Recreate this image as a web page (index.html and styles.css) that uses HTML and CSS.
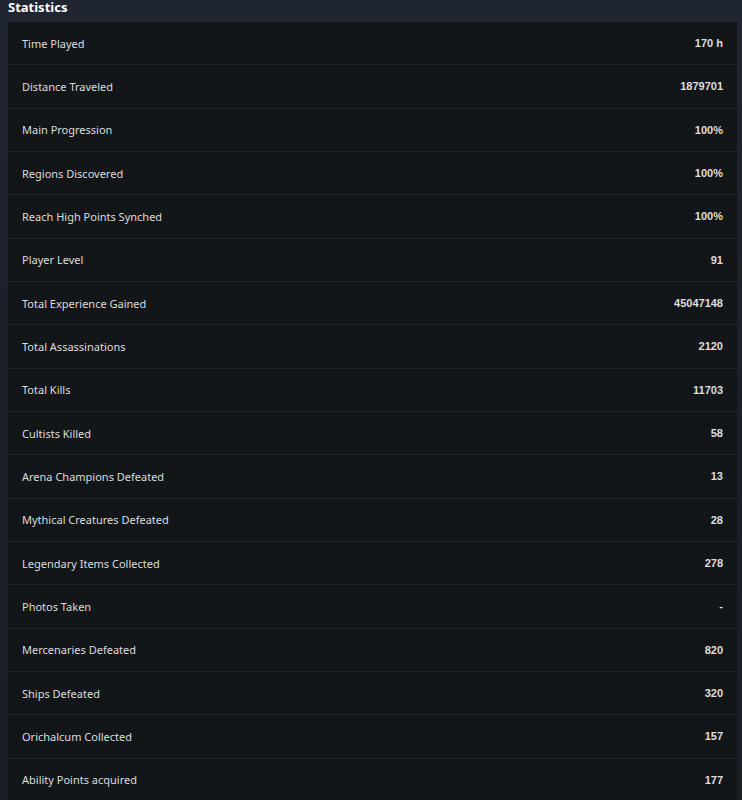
FILE: index.html
```html
<!DOCTYPE html>
<html>
<head>
<meta charset="utf-8">
<link rel="stylesheet" href="styles.css">
</head>
<body>
<h2 class="title">Statistics</h2>
<div class="panel">
  <div class="row"><span class="label">Time Played</span><span class="value">170 h</span></div>
  <div class="row"><span class="label">Distance Traveled</span><span class="value">1879701</span></div>
  <div class="row"><span class="label">Main Progression</span><span class="value">100%</span></div>
  <div class="row"><span class="label">Regions Discovered</span><span class="value">100%</span></div>
  <div class="row"><span class="label">Reach High Points Synched</span><span class="value">100%</span></div>
  <div class="row"><span class="label">Player Level</span><span class="value">91</span></div>
  <div class="row"><span class="label">Total Experience Gained</span><span class="value">45047148</span></div>
  <div class="row"><span class="label">Total Assassinations</span><span class="value">2120</span></div>
  <div class="row"><span class="label">Total Kills</span><span class="value">11703</span></div>
  <div class="row"><span class="label">Cultists Killed</span><span class="value">58</span></div>
  <div class="row"><span class="label">Arena Champions Defeated</span><span class="value">13</span></div>
  <div class="row"><span class="label">Mythical Creatures Defeated</span><span class="value">28</span></div>
  <div class="row"><span class="label">Legendary Items Collected</span><span class="value">278</span></div>
  <div class="row"><span class="label">Photos Taken</span><span class="value">-</span></div>
  <div class="row"><span class="label">Mercenaries Defeated</span><span class="value">820</span></div>
  <div class="row"><span class="label">Ships Defeated</span><span class="value">320</span></div>
  <div class="row"><span class="label">Orichalcum Collected</span><span class="value">157</span></div>
  <div class="row"><span class="label">Ability Points acquired</span><span class="value">177</span></div>
</div>
</body>
</html>
```
FILE: styles.css
```css
html, body {
  margin: 0;
  padding: 0;
}
body {
  background: linear-gradient(180deg, #1f2631 0%, #1b2129 40%, #1a1f26 100%);
  overflow: hidden;
  height: 800px;
}
.title {
  margin: 0;
  height: 22px;
  padding-left: 8px;
  font-family: "Noto Sans", sans-serif;
  font-weight: 700;
  font-size: 13px;
  line-height: 15px;
  color: #ffffff;
}
.panel {
  margin: 0 5px 0 8px;
  background: #131619;
  display: flex;
  flex-direction: column;
}
.row {
  box-sizing: border-box;
  height: 43.33px;
  display: flex;
  align-items: center;
  justify-content: space-between;
  padding: 0 14px 0 14px;
  border-bottom: 1px solid #1e252a;
}
.label {
  font-family: "Noto Sans", sans-serif;
  font-size: 11px;
  color: #dcdcdc;
}
.value {
  font-family: "Liberation Sans", Arial, sans-serif;
  font-weight: 700;
  font-size: 11px;
  color: #dedede;
}
```
